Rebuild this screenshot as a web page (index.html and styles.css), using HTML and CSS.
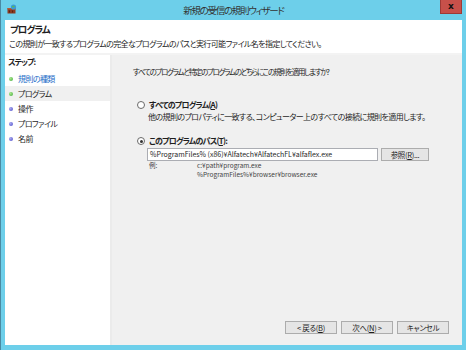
FILE: index.html
```html
<!DOCTYPE html>
<html lang="ja">
<head>
    <meta charset="UTF-8">
    <title>新規の受信の規則ウィザード</title>
    <link rel="stylesheet" href="styles.css">
</head>
<body>
    <div class="window">
        <div class="titlebar">
            <div class="app-icon">
                <svg width="10" height="10" viewBox="0 0 10 10">
                    <rect x="0.5" y="4" width="8" height="5.5" fill="#8a3a22"/>
                    <rect x="0.5" y="4" width="8" height="1.5" fill="#b45a36"/>
                    <rect x="2" y="6.5" width="1" height="2" fill="#5a2010"/>
                    <rect x="5" y="6.5" width="1" height="2" fill="#5a2010"/>
                    <circle cx="6.5" cy="3" r="2.6" fill="#3a9ad8"/>
                    <path d="M5 2.2 Q6.5 1 7.8 2.4 Q7 3.6 5.6 3.4 Z" fill="#5cc04a"/>
                </svg>
            </div>
            <div class="title">新規の受信の規則ウィザード</div>
            <div class="close">x</div>
        </div>

        <div class="client">
            <div class="header">
                <h1>プログラム</h1>
                <p>この規則が一致するプログラムの完全なプログラムのパスと実行可能ファイル名を指定してください。</p>
            </div>

            <div class="body">
                <div class="steps">
                    <div class="steps-title">ステップ:</div>
                    <ul>
                        <li class="link"><span class="dot green"></span>規則の種類</li>
                        <li class="current"><span class="dot green"></span>プログラム</li>
                        <li><span class="dot blue"></span>操作</li>
                        <li><span class="dot blue"></span>プロファイル</li>
                        <li><span class="dot blue"></span>名前</li>
                    </ul>
                </div>

                <div class="main">
                    <p class="question">すべてのプログラムと特定のプログラムのどちらにこの規則を適用しますか?</p>

                    <div class="option first">
                        <div class="option-row">
                            <span class="radio"></span>
                            <span class="option-label">すべてのプログラム(<u>A</u>)</span>
                        </div>
                        <div class="option-desc">他の規則のプロパティに一致する、コンピューター上のすべての接続に規則を適用します。</div>
                    </div>

                    <div class="option">
                        <div class="option-row">
                            <span class="radio checked"></span>
                            <span class="option-label">このプログラムのパス(<u>T</u>):</span>
                        </div>
                        <div class="path-row">
                            <div class="path-input">%ProgramFiles% (x86)¥Alfatech¥AlfatechFL¥alfaflex.exe</div>
                            <div class="btn browse">参照(<u>R</u>)...</div>
                        </div>
                        <div class="example">
                            <span class="example-label">例:</span>
                            <span class="example-text">c:¥path¥program.exe<br>%ProgramFiles%¥browser¥browser.exe</span>
                        </div>
                    </div>

                    <div class="buttons">
                        <div class="btn">&lt; 戻る(<u>B</u>)</div>
                        <div class="btn">次へ(<u>N</u>) &gt;</div>
                        <div class="btn">キャンセル</div>
                    </div>
                </div>
            </div>
        </div>
    </div>
</body>
</html>
```

FILE: styles.css
```css
body {
    margin: 0;
    font-family: "Noto Sans CJK JP", "Noto Sans", sans-serif;
    font-feature-settings: "palt";
    font-size: 8px;
    letter-spacing: -0.6px;
    color: #1e1e1e;
}
.window {
    width: 466px;
    height: 350px;
    box-sizing: border-box;
    background: #6dcfea;
    border-left: 1px solid #4b8aa3;
    display: flex;
    flex-direction: column;
}
.titlebar {
    height: 20px;
    display: grid;
    grid-template-columns: 1fr auto 1fr;
    align-items: start;
}
.app-icon {
    padding: 4px 0 0 6px;
}
.title {
    font-size: 9.5px;
    letter-spacing: -1.3px;
    color: #333;
    line-height: 21px;
}
.close {
    justify-self: end;
    width: 22px;
    height: 14px;
    margin-right: 4px;
    background: #c7504a;
    border: 1px solid #9e3a36;
    border-top: none;
    box-sizing: border-box;
    color: #111;
    font: bold 9px "DejaVu Sans", sans-serif;
    letter-spacing: 0;
    text-align: center;
    line-height: 12px;
}
.client {
    flex: 1;
    margin: 0 4px 5px 4px;
    background: #fff;
    display: flex;
    flex-direction: column;
}
.header {
    height: 35px;
    padding: 2px 0 0 4px;
    box-sizing: border-box;
    border-bottom: 2px solid #f3f3f3;
}
.header h1 {
    margin: 0 0 0 1px;
    font-size: 9.5px;
    letter-spacing: -1px;
    font-weight: bold;
    line-height: 15px;
}
.header p {
    margin: 0;
    line-height: 14px;
}
.body {
    flex: 1;
    display: flex;
}
.steps {
    width: 105px;
    border-right: 2px solid #ebebeb;
}
.steps-title {
    font-weight: bold;
    letter-spacing: -0.9px;
    padding: 1px 0 0 3px;
    line-height: 12px;
}
.steps ul {
    list-style: none;
    margin: 3px 0 0;
    padding: 0;
}
.steps li {
    height: 15px;
    line-height: 15px;
    padding-left: 4px;
    display: flex;
    align-items: center;
    gap: 5px;
}
.steps li.link {
    color: #1c6cc8;
}
.steps li.current {
    background: #f0f0f0;
}
.dot {
    width: 4px;
    height: 4px;
    border-radius: 50%;
}
.dot.green {
    background: radial-gradient(circle at 35% 35%, #a8e88a, #3fa83a);
}
.dot.blue {
    background: radial-gradient(circle at 35% 35%, #a9a9f0, #4a4ac8);
}
.main {
    flex: 1;
    background: #f0f0f0;
    padding: 10px 0 0 21px;
    display: flex;
    flex-direction: column;
}
.question {
    margin: 0 0 20px;
    line-height: 14px;
    font-size: 7.5px;
    letter-spacing: -1.3px;
}
.option {
    padding-left: 4px;
}
.option.first {
    margin-bottom: 12px;
}
.option-row {
    display: flex;
    align-items: center;
    gap: 4px;
    line-height: 12px;
}
.radio {
    width: 6px;
    height: 6px;
    border: 1px solid #6a6a6a;
    border-radius: 50%;
    background: #fff;
    position: relative;
}
.radio.checked::after {
    content: "";
    position: absolute;
    left: 1.5px;
    top: 1.5px;
    width: 3px;
    height: 3px;
    border-radius: 50%;
    background: #333;
}
.option-label {
    font-weight: bold;
    letter-spacing: -0.8px;
}
.option-desc {
    padding-left: 11px;
    line-height: 12px;
}
.path-row {
    display: flex;
    gap: 3px;
    margin: 1px 0 0 10px;
}
.path-input {
    width: 231px;
    height: 13px;
    box-sizing: border-box;
    background: #fff;
    border: 1px solid #abadb3;
    font-size: 7px;
    letter-spacing: 0;
    line-height: 11px;
    padding-left: 2px;
}
.btn {
    width: 52px;
    height: 13px;
    box-sizing: border-box;
    background: #e5e5e5;
    border: 1px solid #acacac;
    text-align: center;
    line-height: 11px;
    font-size: 7.5px;
    letter-spacing: -0.3px;
}
.browse {
    width: 48px;
}
.example {
    display: flex;
    margin: 0 0 0 12px;
    font-size: 6.5px;
    letter-spacing: 0;
    line-height: 9px;
    color: #444;
}
.example-label {
    width: 48px;
}
.buttons {
    margin-top: auto;
    margin-bottom: 11px;
    display: flex;
    gap: 4px;
    padding-left: 152px;
}
```
